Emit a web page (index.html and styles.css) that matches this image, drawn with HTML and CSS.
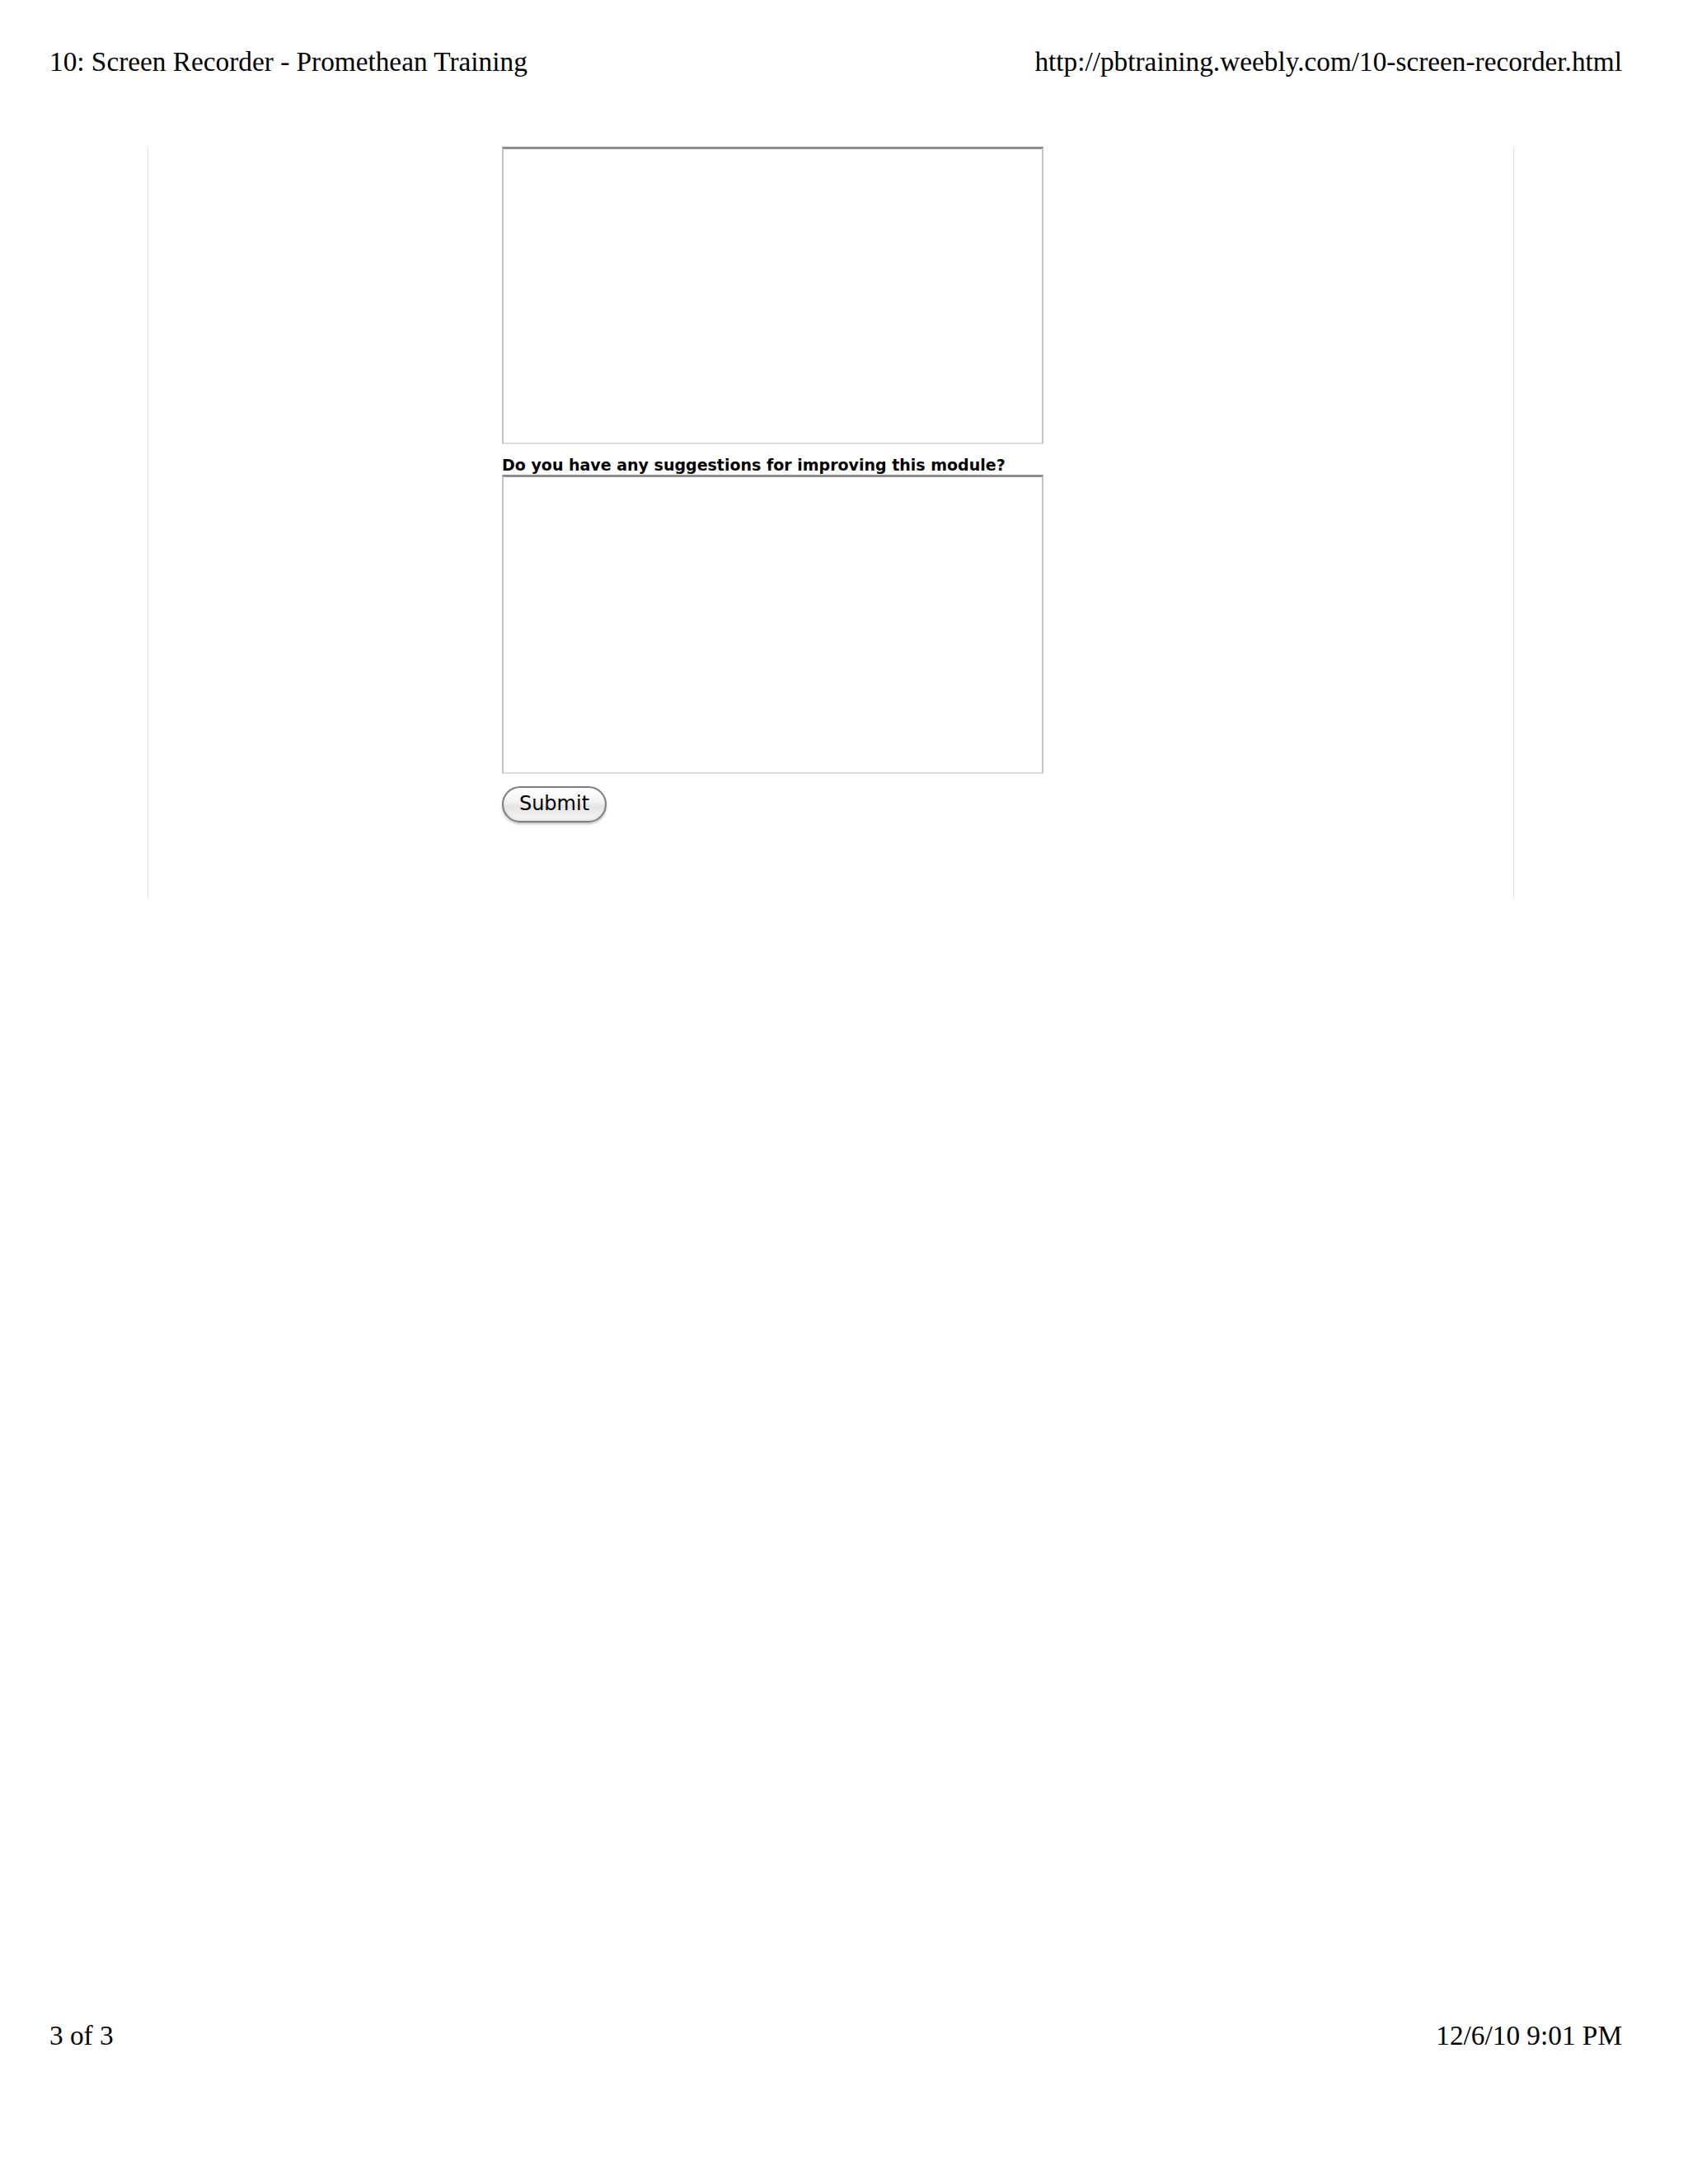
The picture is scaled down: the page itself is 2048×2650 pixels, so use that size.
FILE: index.html
```html
<!DOCTYPE html>
<html>
<head>
<meta charset="utf-8">
<title>10: Screen Recorder - Promethean Training</title>
<link rel="stylesheet" href="styles.css">
</head>
<body>
<div class="page">
  <header class="print-bar top">
    <span>10: Screen Recorder - Promethean Training</span>
    <span>http://pbtraining.weebly.com/10-screen-recorder.html</span>
  </header>
  <main class="frame">
    <form class="form">
      <textarea class="field"></textarea>
      <label class="label">Do you have any suggestions for improving this module?</label>
      <textarea class="field second"></textarea>
      <button type="button" class="submit">Submit</button>
    </form>
  </main>
  <footer class="print-bar bottom">
    <span>3 of 3</span>
    <span>12/6/10 9:01 PM</span>
  </footer>
</div>
</body>
</html>
```
FILE: styles.css
```css
html, body {
  margin: 0;
  padding: 0;
  background: #ffffff;
}
.page {
  height: 2650px;
  display: flex;
  flex-direction: column;
  box-sizing: border-box;
  padding-bottom: 162px;
}
.print-bar {
  display: flex;
  justify-content: space-between;
  padding: 0 80px 0 60px;
  font-family: "Liberation Serif", "Times New Roman", serif;
  font-size: 33.3px;
  line-height: 36px;
  color: #000;
}
.print-bar.top {
  padding-top: 57px;
}
.print-bar.bottom {
  margin-top: auto;
}
.frame {
  margin: 85px 0 0 179px;
  width: 1658px;
  height: 912px;
  box-sizing: border-box;
  border-left: 1px solid #e2e2e2;
  border-right: 1px solid #e2e2e2;
  padding-left: 429px;
}
.form {
  display: flex;
  flex-direction: column;
  align-items: flex-start;
}
.field {
  display: block;
  margin: 0;
  padding: 0;
  width: 657px;
  height: 361px;
  box-sizing: border-box;
  border-style: solid;
  border-width: 3px 2px 2px 2px;
  border-color: #8c8c8c #c4c4c4 #dedede #c4c4c4;
  resize: none;
  background: #fff;
}
.field.second {
  height: 363px;
}
.label {
  display: block;
  margin-top: 14px;
  font-family: "DejaVu Sans", Verdana, sans-serif;
  font-weight: bold;
  font-size: 19px;
  line-height: 23px;
  color: #000;
  white-space: nowrap;
}
.submit {
  margin-top: 15px;
  width: 127px;
  height: 44px;
  padding: 0 0 2px 0;
  border: 2px solid #7d7d7d;
  border-radius: 22px;
  background: linear-gradient(to bottom, #ffffff 0%, #f2f2f2 45%, #e4e4e4 55%, #f8f8f8 100%);
  box-shadow: 0 2px 3px rgba(0,0,0,0.25), inset 0 -2px 3px rgba(0,0,0,0.08);
  font-family: "DejaVu Sans", Verdana, sans-serif;
  font-size: 24px;
  color: #000;
}
```
